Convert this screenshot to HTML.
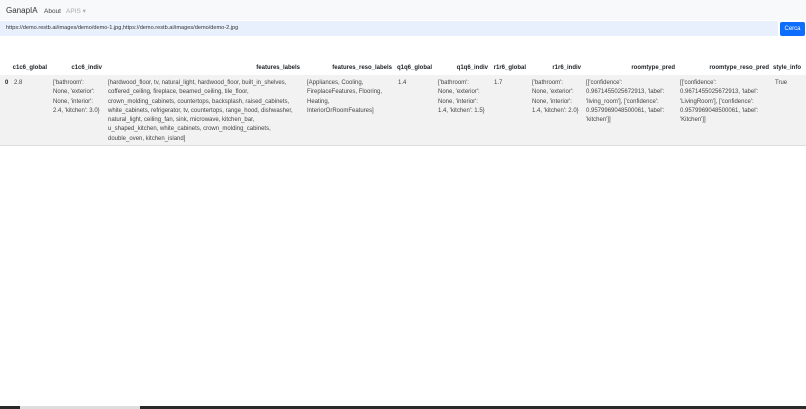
<!DOCTYPE html>
<html><head><style>
*{margin:0;padding:0;box-sizing:border-box}
body{width:806px;height:409px;background:#fff;font-family:"Liberation Sans",sans-serif;position:relative;overflow:hidden;color:#212529}
.a{position:absolute;font-size:6px;line-height:9.3px;white-space:nowrap}
.h{font-weight:bold;text-align:right}
.w{white-space:normal}
</style></head><body>
<div style="position:absolute;left:0;top:0;width:806px;height:20px;background:#f8f9fa"></div>
<div class="a" style="left:6px;top:6px;font-size:8px;line-height:10px;color:#333">GanapIA</div>
<div class="a" style="left:44px;top:7px;font-size:6.5px;color:#444">About</div>
<div class="a" style="left:66px;top:7px;font-size:6.5px;color:#aaa">APIS ▾</div>
<div style="position:absolute;left:0;top:21px;width:778px;height:15px;background:#e8f0fe"></div>
<div class="a" style="left:6px;top:24px;font-size:5.6px;color:#333">https://demo.restb.ai/images/demo/demo-1.jpg,https://demo.restb.ai/images/demo/demo-2.jpg</div>
<div style="position:absolute;left:780px;top:22px;width:25px;height:14px;background:#0d6efd;border-radius:2px;color:#fff;font-size:6px;line-height:14px;text-align:center">Cerca</div>

<div style="position:absolute;left:0;top:75px;width:806px;height:71px;background:#f2f2f2;border-bottom:1px solid #ddd"></div>

<div class="a h" style="left:0;width:47px;top:64px">c1c6_global</div>
<div class="a h" style="left:50px;width:52px;top:64px">c1c6_indiv</div>
<div class="a h" style="left:105px;width:195px;top:64px">features_labels</div>
<div class="a h" style="left:303px;width:89px;top:64px">features_reso_labels</div>
<div class="a h" style="left:395px;width:37px;top:64px">q1q6_global</div>
<div class="a h" style="left:435px;width:53px;top:64px">q1q6_indiv</div>
<div class="a h" style="left:491px;width:35px;top:64px">r1r6_global</div>
<div class="a h" style="left:529px;width:52px;top:64px">r1r6_indiv</div>
<div class="a h" style="left:584px;width:91px;top:64px">roomtype_pred</div>
<div class="a h" style="left:678px;width:91px;top:64px">roomtype_reso_pred</div>
<div class="a h" style="left:772px;width:29px;top:64px">style_info</div>

<div class="a" style="left:5px;top:79px;font-weight:bold">0</div>
<div class="a" style="left:14px;top:79px;color:#444">2.8</div>
<div class="a w" style="left:53px;top:79px;width:52px;color:#444">['bathroom':<br>None, 'exterior':<br>None, 'interior':<br>2.4, 'kitchen': 3.0}</div>
<div class="a w" style="left:108px;top:79px;width:196px;color:#444">[hardwood_floor, tv, natural_light, hardwood_floor, built_in_shelves,<br>coffered_ceiling, fireplace, beamed_ceiling, tile_floor,<br>crown_molding_cabinets, countertops, backsplash, raised_cabinets,<br>white_cabinets, refrigerator, tv, countertops, range_hood, dishwasher,<br>natural_light, ceiling_fan, sink, microwave, kitchen_bar,<br>u_shaped_kitchen, white_cabinets, crown_molding_cabinets,<br>double_oven, kitchen_island]</div>
<div class="a w" style="left:307px;top:79px;width:88px;color:#444">[Appliances, Cooling,<br>FireplaceFeatures, Flooring,<br>Heating,<br>InteriorOrRoomFeatures]</div>
<div class="a" style="left:398px;top:79px;color:#444">1.4</div>
<div class="a w" style="left:438px;top:79px;width:52px;color:#444">['bathroom':<br>None, 'exterior':<br>None, 'interior':<br>1.4, 'kitchen': 1.5}</div>
<div class="a" style="left:494px;top:79px;color:#444">1.7</div>
<div class="a w" style="left:532px;top:79px;width:52px;color:#444">['bathroom':<br>None, 'exterior':<br>None, 'interior':<br>1.4, 'kitchen': 2.0}</div>
<div class="a w" style="left:586px;top:79px;width:92px;color:#444">[['confidence':<br>0.9671455025672913, 'label':<br>'living_room'], ['confidence':<br>0.9579969048500061, 'label':<br>'kitchen']]</div>
<div class="a w" style="left:680px;top:79px;width:92px;color:#444">[['confidence':<br>0.9671455025672913, 'label':<br>'LivingRoom'], ['confidence':<br>0.9579969048500061, 'label':<br>'Kitchen']]</div>
<div class="a" style="left:775px;top:79px;color:#444">True</div>

<div style="position:absolute;left:0;top:406px;width:806px;height:3px;background:#2a2a2a"></div>
<div style="position:absolute;left:20px;top:406px;width:120px;height:3px;background:#ddd"></div>
</body></html>
